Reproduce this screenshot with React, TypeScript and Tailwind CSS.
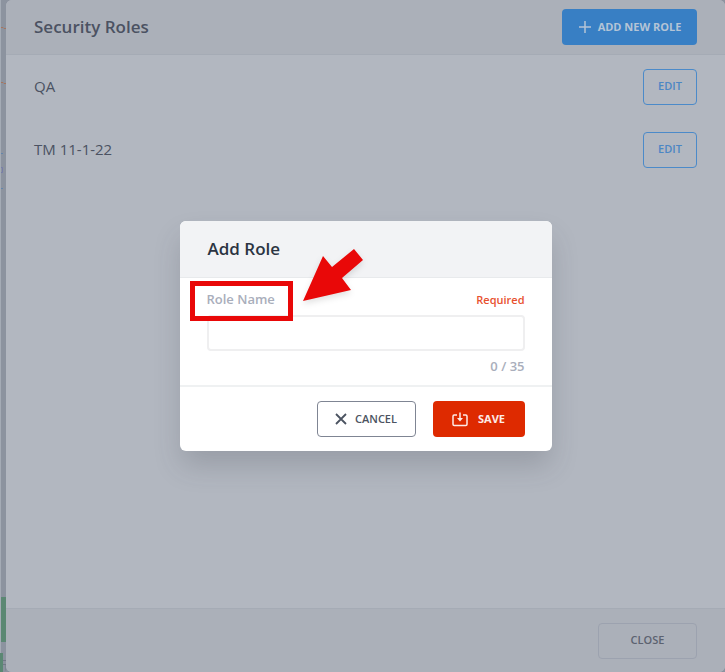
import clsx from 'clsx'
import { ComponentProps, useState } from 'react'

const MAX_LENGTH = 35

const roles = ['QA', 'TM 11-1-22']

function Button({ className, ...rest }: ComponentProps<'button'>) {
  return (
    <button
      type="button"
      className={clsx(
        'flex h-9 shrink-0 items-center justify-center rounded uppercase',
        className
      )}
      {...rest}
    />
  )
}

function PlusIcon() {
  return (
    <svg width="14" height="14" viewBox="0 0 14 14" aria-hidden="true">
      <path d="M7 1v12M1 7h12" stroke="currentColor" strokeWidth="1.5" />
    </svg>
  )
}

function CrossIcon() {
  return (
    <svg width="12" height="12" viewBox="0 0 12 12" aria-hidden="true">
      <path d="M1 1l10 10M11 1L1 11" stroke="currentColor" strokeWidth="1.8" />
    </svg>
  )
}

function SaveIcon() {
  return (
    <svg
      width="16"
      height="15"
      viewBox="0 0 16 15"
      fill="none"
      stroke="currentColor"
      strokeWidth="1.5"
      aria-hidden="true"
    >
      <path d="M5 3H2.200Q1 3 1 4.200v8.100q0 1.200 1.200 1.200h11.600q1.200 0 1.200-1.200V4.200q0-1.200-1.200-1.200H11" />
      <path d="M8 .5v7" />
      <path d="M5 6h6L8 9.500z" fill="currentColor" stroke="none" />
    </svg>
  )
}

function Pointer() {
  return (
    <svg
      className="pointer-events-none absolute top-6 left-[120px]"
      width="68"
      height="64"
      viewBox="0 0 68 64"
      aria-hidden="true"
    >
      <path
        d="M3 56L23 11l9 11L54 4l9 11-21 18 9 12z"
        fill="#e90808"
        className="drop-shadow-md"
      />
    </svg>
  )
}

// sliver of the map that stays visible beside the panel
function MapEdge() {
  return (
    <svg className="h-full w-1.5 shrink-0" aria-hidden="true">
      <rect width="1" height="100%" fill="#a4abb5" />
      <path d="M1 27.500h2l1 1h2M1 82.500h2l1 1h2" stroke="#a6755f" fill="none" />
      <path d="M1 153.500h2M1 188.500h2" stroke="#6385ab" />
      <path d="M1 167.500h1.500v5H1" stroke="#777da8" fill="none" />
      <rect y="597" x="1" width="5" height="45" fill="#5b8873" />
      <rect y="653" width="3" height="19" fill="#5b8873" />
      <path d="M3 660.500h3M3 664.500h3v6" stroke="#727987" fill="none" />
    </svg>
  )
}

function AddRole() {
  const [name, setName] = useState('')
  return (
    <form
      role="dialog"
      aria-labelledby="add-role-title"
      className="relative w-[372px] rounded-md bg-white shadow-[0_16px_28px_-2px_rgba(60,65,75,0.22)]"
    >
      <header className="flex h-[57px] items-center rounded-t-md border-b border-[#e8eaec] bg-[#f2f3f5] px-7">
        <h2 id="add-role-title" className="text-[17px] font-semibold text-[#2b3442]">
          Add Role
        </h2>
      </header>
      <div className="flex flex-col px-[27px] pt-3.5 pb-2.5">
        <div className="flex h-4 items-center justify-between">
          <label
            htmlFor="role-name"
            className="text-[13px] font-semibold text-[#a9aebb]"
          >
            Role Name
          </label>
          <span className="text-[11px] font-semibold text-[#e8512f]">Required</span>
        </div>
        <input
          id="role-name"
          type="text"
          required
          maxLength={MAX_LENGTH}
          value={name}
          onChange={(e) => setName(e.target.value)}
          className="mt-[7px] h-9 w-full rounded border-2 border-[#efeff0] px-2 text-sm outline-none"
        />
        <span className="mt-1.5 self-end text-[13px] leading-[18px] font-semibold text-[#a9aebb]">
          {name.length} / {MAX_LENGTH}
        </span>
      </div>
      <footer className="flex justify-end gap-[17px] border-t-2 border-[#eff1f2] px-[27px] py-3.5">
        <Button className="w-[99px] gap-2 border border-[#7f8593] text-[11px] font-semibold text-[#4b5361]">
          <CrossIcon />
          Cancel
        </Button>
        <Button className="w-[92px] gap-2.5 bg-[#de2a00] text-[11px] font-bold text-[#fdebe7]">
          <SaveIcon />
          Save
        </Button>
      </footer>
      <div className="pointer-events-none absolute top-[60px] left-2.5 h-10 w-[103px] border-5 border-[#e90808]" />
      <Pointer />
    </form>
  )
}

export default function App() {
  return (
    <div className="flex h-screen bg-[#8c939f] font-['Open_Sans','Noto_Sans',sans-serif]">
      <MapEdge />
      <main className="relative flex min-w-0 flex-1 flex-col overflow-hidden rounded-md bg-[#b2b7c0] text-[#4b5262]">
        <header className="flex h-[55px] items-center justify-between border-b border-[#a5abb5] bg-[#abb0b9] px-7">
          <h1 className="text-[17px] font-semibold">Security Roles</h1>
          <Button className="w-[135px] gap-1.5 bg-[#387fc4] text-[11px] font-bold text-[#b4c4d6]">
            <PlusIcon />
            Add New Role
          </Button>
        </header>
        <ul className="flex-1">
          {roles.map((role) => (
            <li
              key={role}
              className="flex h-[63px] items-center justify-between px-7 text-[15px] font-medium"
            >
              {role}
              <Button className="w-[54px] border border-[#4b8ac9] text-[11px] font-semibold text-[#4b86c4]">
                Edit
              </Button>
            </li>
          ))}
        </ul>
        <footer className="flex h-16 items-center justify-end border-t border-[#a5abb5] bg-[#abb0b9] px-7">
          <Button className="w-[99px] border border-[#9ca2af] text-[11px] font-semibold text-[#5c6270]">
            Close
          </Button>
        </footer>
        <div className="absolute inset-0 flex items-center justify-center">
          <AddRole />
        </div>
      </main>
    </div>
  )
}
